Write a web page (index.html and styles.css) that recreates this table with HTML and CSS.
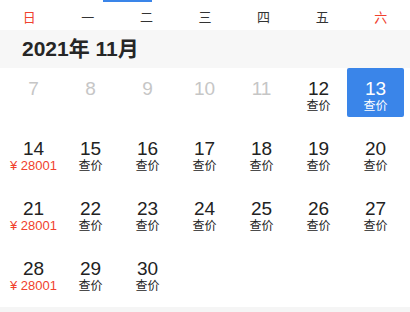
FILE: index.html
```html
<!DOCTYPE html>
<html lang="zh">
<head>
<meta charset="utf-8">
<link rel="stylesheet" href="styles.css">
</head>
<body>
<div class="cal">
  <div class="tabline"><span class="indicator"></span></div>
  <div class="weekdays">
    <span class="wk red">日</span><span class="wk">一</span><span class="wk">二</span><span class="wk">三</span><span class="wk">四</span><span class="wk">五</span><span class="wk red">六</span>
  </div>
  <div class="month">2021年 11月</div>
  <div class="days">
    <div class="day past"><span class="num">7</span></div>
    <div class="day past"><span class="num">8</span></div>
    <div class="day past"><span class="num">9</span></div>
    <div class="day past"><span class="num">10</span></div>
    <div class="day past"><span class="num">11</span></div>
    <div class="day"><span class="num">12</span><span class="sub">查价</span></div>
    <div class="day selected"><span class="num">13</span><span class="sub">查价</span></div>

    <div class="day"><span class="num">14</span><span class="sub price">¥ 28001</span></div>
    <div class="day"><span class="num">15</span><span class="sub">查价</span></div>
    <div class="day"><span class="num">16</span><span class="sub">查价</span></div>
    <div class="day"><span class="num">17</span><span class="sub">查价</span></div>
    <div class="day"><span class="num">18</span><span class="sub">查价</span></div>
    <div class="day"><span class="num">19</span><span class="sub">查价</span></div>
    <div class="day"><span class="num">20</span><span class="sub">查价</span></div>

    <div class="day"><span class="num">21</span><span class="sub price">¥ 28001</span></div>
    <div class="day"><span class="num">22</span><span class="sub">查价</span></div>
    <div class="day"><span class="num">23</span><span class="sub">查价</span></div>
    <div class="day"><span class="num">24</span><span class="sub">查价</span></div>
    <div class="day"><span class="num">25</span><span class="sub">查价</span></div>
    <div class="day"><span class="num">26</span><span class="sub">查价</span></div>
    <div class="day"><span class="num">27</span><span class="sub">查价</span></div>

    <div class="day"><span class="num">28</span><span class="sub price">¥ 28001</span></div>
    <div class="day"><span class="num">29</span><span class="sub">查价</span></div>
    <div class="day"><span class="num">30</span><span class="sub">查价</span></div>
  </div>
  <div class="footer"></div>
</div>
</body>
</html>
```
FILE: styles.css
```css
* { box-sizing: border-box; margin: 0; padding: 0; }
html, body { background: #fff; }
body {
  width: 410px;
  height: 312px;
  overflow: hidden;
  font-family: "Liberation Sans", "Noto Sans CJK SC", sans-serif;
  color: #222;
}
.tabline {
  height: 2px;
  display: flex;
}
.indicator {
  margin-left: 103px;
  width: 49px;
  height: 2px;
  background: #3a85e9;
}
.weekdays {
  display: grid;
  grid-template-columns: repeat(7, 1fr);
  height: 28px;
  padding-top: 4px;
}
.wk {
  text-align: center;
  font-size: 13px;
  line-height: 24px;
  color: #333;
}
.wk.red { color: #f0412e; }
.month {
  height: 38px;
  background: #f7f7f7;
  padding-left: 22px;
  font-size: 21px;
  font-weight: 600;
  line-height: 38px;
  color: #262626;
}
.days {
  display: grid;
  grid-template-columns: repeat(7, 57px);
  grid-auto-rows: 49px;
  row-gap: 11px;
  padding: 0 5px 10px 5px;
}
.day {
  display: flex;
  flex-direction: column;
  align-items: center;
  padding-top: 11px;
}
.num {
  font-size: 19px;
  line-height: 20px;
}
.sub {
  font-size: 12px;
  line-height: 14px;
  color: #222;
}
.sub.price { font-size: 13px; color: #f0412e; }
.past .num { color: #c6c6c6; }
.selected {
  background: #3a85e9;
  border-radius: 2px;
}
.selected .num, .selected .sub { color: #fff; }
.footer {
  height: 10px;
  background: #f5f5f5;
}
```
